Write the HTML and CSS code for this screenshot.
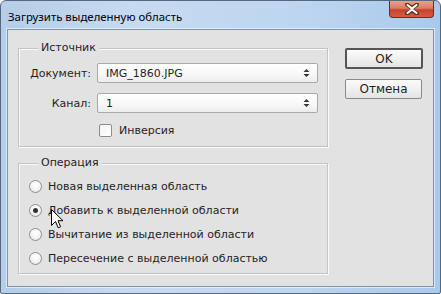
FILE: index.html
```html
<!DOCTYPE html>
<html lang="ru">
<head>
<meta charset="utf-8">
<title>Загрузить выделенную область</title>
<link rel="stylesheet" href="styles.css">
</head>
<body>
<div class="window">
  <div class="titlebar">
    <span class="title">Загрузить выделенную область</span>
    <div class="close">
      <svg width="16" height="12" viewBox="0 0 16 12"><path d="M3 1.5 L8 5 L13 1.5 M3 10.5 L8 7 L13 10.5" fill="none" stroke="#5a2b22" stroke-width="4" stroke-linecap="round"/><path d="M3.5 2 L8 5.5 L12.5 2 M3.5 10 L8 6.5 L12.5 10" fill="none" stroke="#ffffff" stroke-width="2.2" stroke-linecap="round"/></svg>
    </div>
  </div>
  <div class="client">
    <div class="main">
      <div class="group group-source">
        <span class="group-title">Источник</span>
        <div class="fields">
          <label class="field-label">Документ:</label>
          <div class="select"><span>IMG_1860.JPG</span><svg class="arrows" width="7" height="10" viewBox="0 0 7 10"><path d="M3.5 1 L6.5 4 L0.5 4 Z M3.5 9 L6.5 6 L0.5 6 Z" fill="#333"/></svg></div>
          <label class="field-label">Канал:</label>
          <div class="select"><span>1</span><svg class="arrows" width="7" height="10" viewBox="0 0 7 10"><path d="M3.5 1 L6.5 4 L0.5 4 Z M3.5 9 L6.5 6 L0.5 6 Z" fill="#333"/></svg></div>
          <span></span>
          <div class="check-row"><span class="checkbox"></span><span>Инверсия</span></div>
        </div>
      </div>
      <div class="group group-op">
        <span class="group-title">Операция</span>
        <div class="radio-row"><span class="radio"></span><span>Новая выделенная область</span></div>
        <div class="radio-row"><span class="radio checked"></span><span>Добавить к выделенной области</span></div>
        <div class="radio-row"><span class="radio"></span><span>Вычитание из выделенной области</span></div>
        <div class="radio-row"><span class="radio"></span><span>Пересечение с выделенной областью</span></div>
      </div>
    </div>
    <div class="buttons">
      <div class="btn btn-default">OK</div>
      <div class="btn">Отмена</div>
    </div>
  </div>
  <svg class="cursor" width="13" height="20" viewBox="0 0 13 20"><path d="M0.5 0.5 L0.5 16.5 L4.5 12.5 L7.2 18.8 L9.6 17.8 L7 11.7 L12 11.7 Z" fill="#fff" stroke="#000" stroke-width="1" stroke-linejoin="miter"/></svg>
</div>
</body>
</html>
```

FILE: styles.css
```css
html, body {
  margin: 0;
  padding: 0;
  background: #ffffff;
}
.window {
  position: relative;
  width: 441px;
  height: 294px;
  box-sizing: border-box;
  border: 1px solid #55697e;
  border-radius: 6px 6px 2px 2px;
  background: linear-gradient(to right, #b5cde8 0%, #c6dbf1 30%, #bdd5ef 70%, #a9c9ec 100%);
  display: flex;
  flex-direction: column;
  font-family: "DejaVu Sans", sans-serif;
  font-size: 11px;
  color: #1f1f1f;
  overflow: hidden;
}
.titlebar {
  height: 28px;
  display: flex;
  align-items: flex-start;
  justify-content: space-between;
  padding-left: 7px;
  flex-shrink: 0;
}
.title {
  font-family: "Noto Sans", sans-serif;
  font-size: 11.4px;
  color: #000;
  margin-top: 8px;
  line-height: 16px;
}
.close {
  width: 45px;
  height: 17px;
  margin-right: 6px;
  box-sizing: border-box;
  border: 1px solid #6b2c22;
  border-top: none;
  border-radius: 0 0 4px 4px;
  background: linear-gradient(to bottom, #eaa292 0%, #dc7a66 45%, #c7432c 55%, #d55c42 100%);
  display: flex;
  align-items: center;
  justify-content: center;
}
.client {
  margin: 0 6px 6px 6px;
  flex: 1;
  border: 1px solid #7f93a8;
  box-shadow: 0 0 0 1px rgba(255,255,255,0.55);
  background: #e2e2e2;
  display: flex;
  padding: 18px 0 0 10px;
}
.main {
  display: flex;
  flex-direction: column;
  gap: 16px;
}
.group {
  position: relative;
  width: 310px;
  box-sizing: border-box;
  border: 1px solid #c3c3c3;
  box-shadow: inset 1px 1px 0 #fafafa, 1px 1px 0 #fafafa;
}
.group-title {
  position: absolute;
  top: -8px;
  left: 19px;
  padding: 0 3px;
  background: #e2e2e2;
  line-height: 14px;
}
.group-source {
  height: 99px;
  padding: 14px 0 0 0;
}
.fields {
  display: grid;
  grid-template-columns: 72px 221px;
  column-gap: 6px;
  row-gap: 10px;
  align-items: center;
}
.field-label {
  text-align: right;
}
.select {
  height: 20px;
  box-sizing: border-box;
  border: 1px solid #a9a9a9;
  border-radius: 2px;
  background: linear-gradient(to bottom, #ffffff 0%, #f7f7f7 60%, #ececec 100%);
  display: flex;
  align-items: center;
  justify-content: space-between;
  padding: 0 7px 0 8px;
}
.check-row {
  display: flex;
  align-items: center;
  gap: 7px;
  margin-top: 1px;
  padding-left: 2px;
}
.checkbox {
  width: 13px;
  height: 13px;
  box-sizing: border-box;
  border: 1px solid #8c8c8c;
  border-radius: 2px;
  background: linear-gradient(to bottom right, #f4f4f4, #ffffff);
}
.group-op {
  height: 111px;
  padding: 10px 0 0 10px;
}
.radio-row {
  height: 24px;
  display: flex;
  align-items: center;
  gap: 6px;
}
.radio {
  width: 13px;
  height: 13px;
  box-sizing: border-box;
  border: 1px solid #8e8f8f;
  border-radius: 50%;
  background: radial-gradient(circle at 50% 40%, #ffffff 0%, #f2f2f2 55%, #d9d9d9 100%);
  display: flex;
  align-items: center;
  justify-content: center;
}
.radio.checked::after {
  content: "";
  width: 5px;
  height: 5px;
  border-radius: 50%;
  background: #333;
}
.buttons {
  display: flex;
  flex-direction: column;
  gap: 10px;
  margin-left: 17px;
  padding-top: 0;
}
.btn {
  width: 77px;
  height: 20px;
  box-sizing: border-box;
  border: 1px solid #8a8a8a;
  border-radius: 2px;
  background: linear-gradient(to bottom, #fbfbfb 0%, #f0f0f0 50%, #e3e3e3 100%);
  display: flex;
  align-items: center;
  justify-content: center;
  font-family: "DejaVu Sans", sans-serif;
  font-size: 12px;
}
.btn-default {
  width: 78px;
  height: 21px;
  border: 2px solid #555;
}
.cursor {
  position: absolute;
  left: 50px;
  top: 208px;
}
```
